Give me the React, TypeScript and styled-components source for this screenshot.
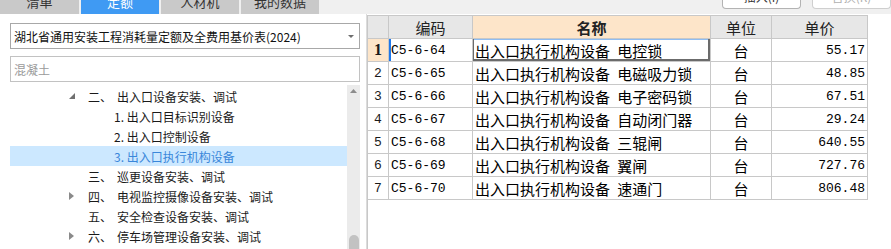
import React from "react";
import styled, { createGlobalStyle, css } from "styled-components";

const Global = createGlobalStyle`
  html, body { margin: 0; padding: 0; background: #ffffff; }
  body { font-family: "Noto Sans CJK SC", "Noto Sans", sans-serif; }
  * { box-sizing: border-box; }
`;

const Page = styled.div`
  width: 891px;
  height: 249px;
  overflow: hidden;
  display: flex;
  flex-direction: column;
  background: #ffffff;
`;

const TopBar = styled.div`
  height: 14px;
  flex: none;
  display: flex;
  background: #f0f0f0;
  overflow: hidden;
`;

const Tabs = styled.div`
  display: grid;
  grid-template-columns: 79px 78px 78px 78px;
  column-gap: 2px;
`;

const Tab = styled.div<{ $active?: boolean }>`
  height: 14px;
  display: flex;
  align-items: flex-end;
  justify-content: center;
  padding-bottom: 5px;
  overflow: hidden;
  font-size: 13px;
  line-height: 14px;
  background: ${(p) => (p.$active ? "#3f9af3" : "#c9c9c9")};
  color: ${(p) => (p.$active ? "#ffffff" : "#333333")};
`;

const TopButtons = styled.div`
  margin-left: auto;
  display: flex;
  gap: 11px;
`;

const TopButton = styled.div<{ $disabled?: boolean }>`
  width: 79px;
  height: 9px;
  display: flex;
  align-items: flex-end;
  justify-content: center;
  padding-bottom: 4px;
  overflow: hidden;
  background: #ffffff;
  border: 1px solid ${(p) => (p.$disabled ? "#cfcfcf" : "#b3b3b3")};
  border-top: none;
  border-radius: 0 0 4px 4px;
  font-size: 12px;
  line-height: 14px;
  color: ${(p) => (p.$disabled ? "#b0b0b0" : "#333333")};
`;

const Body = styled.div`
  flex: 1;
  display: flex;
  min-height: 0;
`;

const LeftPanel = styled.div`
  width: 367px;
  flex: none;
  display: flex;
  flex-direction: column;
  padding: 9px 6px 0 10px;
  border-right: 1px solid #dcdcdc;
  background: #ffffff;
`;

const SelectBox = styled.div`
  height: 26px;
  width: 350px;
  display: flex;
  align-items: center;
  padding: 0 5px 0 3px;
  border: 1px solid #a8a8a8;
  font-size: 12px;
  color: #111111;
`;

const SelectText = styled.span`
  flex: 1;
  white-space: nowrap;
`;

const SearchBox = styled.div`
  height: 26px;
  width: 350px;
  margin-top: 7px;
  display: flex;
  align-items: center;
  padding: 0 3px;
  border: 1px solid #c2c2c2;
  font-size: 12px;
  color: #9a9a9a;
`;

const TreeArea = styled.div`
  flex: 1;
  display: flex;
  margin-top: 3px;
  min-height: 0;
`;

const TreeList = styled.div`
  flex: 1;
  padding-top: 1px;
`;

const TreeRow = styled.div<{ $level: number; $selected?: boolean }>`
  height: 20px;
  display: flex;
  align-items: center;
  font-size: 12px;
  white-space: nowrap;
  padding-left: ${(p) => (p.$level === 1 ? 57 : 104)}px;
  color: ${(p) => (p.$selected ? "#3a87da" : "#1a1a1a")};
  background: ${(p) => (p.$selected ? "#cce8ff" : "transparent")};
`;

const Toggle = styled.span`
  width: 21px;
  flex: none;
  display: flex;
  align-items: center;
  padding-left: 2px;
`;

const Num = styled.span`
  width: 29px;
  flex: none;
`;

const ScrollBar = styled.div`
  width: 13px;
  flex: none;
  display: flex;
  flex-direction: column;
  align-items: center;
  background: #ebebeb;
  padding-top: 4px;
`;

const ScrollSpacer = styled.div`
  flex: 1;
`;

const ScrollThumb = styled.div`
  width: 10px;
  height: 18px;
  flex: none;
  margin-bottom: -4px;
  background: #c2c2c2;
  border-radius: 5px 5px 0 0;
`;

const RightPanel = styled.div`
  flex: 1;
  padding-top: 1px;
  background: #ffffff;
`;

const TableFrame = styled.div`
  height: 100%;
  border-left: 1px solid #c8c8c8;
`;

const Grid = styled.div`
  width: 500px;
  display: grid;
  grid-template-columns: 20px 83px 237px 60px 95px;
  grid-auto-rows: 22px;
  gap: 1px;
  background: #c8c8c8;
  border-top: 1px solid #c8c8c8;
  border-right: 1px solid #c8c8c8;
  border-bottom: 1px solid #c8c8c8;
`;

const HeadCell = styled.div<{ $hot?: boolean }>`
  display: flex;
  align-items: center;
  justify-content: center;
  font-size: 15px;
  color: #222222;
  font-weight: ${(p) => (p.$hot ? 700 : 400)};
  background: ${(p) => (p.$hot ? "#fde5c9" : "#e7e7e7")};
`;

const Cell = styled.div<{
  $align?: "left" | "center" | "right";
  $mono?: boolean;
  $active?: boolean;
  $marker?: boolean;
}>`
  display: flex;
  align-items: center;
  background: #ffffff;
  color: #000000;
  white-space: nowrap;
  overflow: hidden;
  justify-content: ${(p) =>
    p.$align === "center" ? "center" : p.$align === "right" ? "flex-end" : "flex-start"};
  padding: 0 ${(p) => (p.$align === "right" ? 2 : 0)}px 0
    ${(p) => (p.$align === "left" ? 2 : 0)}px;
  ${(p) =>
    p.$mono
      ? css`
          font-family: "Liberation Mono", "Noto Sans CJK SC", monospace;
          font-size: 13px;
        `
      : css`
          font-family: "Noto Sans CJK SC", sans-serif;
          font-size: 15px;
          word-spacing: 4px;
        `}
  ${(p) =>
    p.$active &&
    css`
      box-shadow: inset 1px 0 0 #6b6b6b, inset -2px -2px 0 #6b6b6b, inset 0 1px 0 #8fbdf2;
    `}
  ${(p) =>
    p.$marker &&
    css`
      box-shadow: inset 2px 0 0 #1f78ea;
    `}
`;

const RowNum = styled.div<{ $current?: boolean }>`
  display: flex;
  align-items: center;
  justify-content: center;
  background: ${(p) => (p.$current ? "#fde5c9" : "#ffffff")};
  color: #1a1a1a;
  ${(p) =>
    p.$current
      ? css`
          font-family: "Liberation Serif", serif;
          font-weight: 700;
          font-size: 16px;
        `
      : css`
          font-family: "Liberation Mono", monospace;
          font-size: 13px;
        `}
`;

const OpenIcon = () => (
  <svg width="6" height="6" viewBox="0 0 6 6">
    <polygon points="6,0 6,6 0,6" fill="#707070" />
  </svg>
);

const ClosedIcon = () => (
  <svg width="5" height="8" viewBox="0 0 5 8">
    <polygon points="0,0 5,4 0,8" fill="#8a8a8a" />
  </svg>
);

type TreeItem = {
  level: number;
  toggle?: "open" | "closed";
  num?: string;
  label: string;
  selected?: boolean;
};

const tree: TreeItem[] = [
  { level: 1, toggle: "open", num: "二、", label: "出入口设备安装、调试" },
  { level: 2, label: "1. 出入口目标识别设备" },
  { level: 2, label: "2. 出入口控制设备" },
  { level: 2, label: "3. 出入口执行机构设备", selected: true },
  { level: 1, num: "三、", label: "巡更设备安装、调试" },
  { level: 1, toggle: "closed", num: "四、", label: "电视监控摄像设备安装、调试" },
  { level: 1, num: "五、", label: "安全检查设备安装、调试" },
  { level: 1, toggle: "closed", num: "六、", label: "停车场管理设备安装、调试" },
];

const rows = [
  { code: "C5-6-64", name: "出入口执行机构设备 电控锁", unit: "台", price: "55.17" },
  { code: "C5-6-65", name: "出入口执行机构设备 电磁吸力锁", unit: "台", price: "48.85" },
  { code: "C5-6-66", name: "出入口执行机构设备 电子密码锁", unit: "台", price: "67.51" },
  { code: "C5-6-67", name: "出入口执行机构设备 自动闭门器", unit: "台", price: "29.24" },
  { code: "C5-6-68", name: "出入口执行机构设备 三辊闸", unit: "台", price: "640.55" },
  { code: "C5-6-69", name: "出入口执行机构设备 翼闸", unit: "台", price: "727.76" },
  { code: "C5-6-70", name: "出入口执行机构设备 速通门", unit: "台", price: "806.48" },
];

export default function App() {
  return (
    <Page>
      <Global />
      <TopBar>
        <Tabs>
          <Tab>清单</Tab>
          <Tab $active>定额</Tab>
          <Tab>人材机</Tab>
          <Tab>我的数据</Tab>
        </Tabs>
        <TopButtons>
          <TopButton>插入(I)</TopButton>
          <TopButton $disabled>替换(R)</TopButton>
        </TopButtons>
      </TopBar>
      <Body>
        <LeftPanel>
          <SelectBox>
            <SelectText>湖北省通用安装工程消耗量定额及全费用基价表(2024)</SelectText>
            <svg width="6" height="3" viewBox="0 0 6 3">
              <polygon points="0,0 6,0 3,3" fill="#6e6e6e" />
            </svg>
          </SelectBox>
          <SearchBox>混凝土</SearchBox>
          <TreeArea>
            <TreeList>
              {tree.map((t, i) => (
                <TreeRow key={i} $level={t.level} $selected={t.selected}>
                  {t.level === 1 && (
                    <Toggle>
                      {t.toggle === "open" && <OpenIcon />}
                      {t.toggle === "closed" && <ClosedIcon />}
                    </Toggle>
                  )}
                  {t.num && <Num>{t.num}</Num>}
                  <span>{t.label}</span>
                </TreeRow>
              ))}
            </TreeList>
            <ScrollBar>
              <svg width="7" height="4" viewBox="0 0 7 4">
                <polygon points="0,4 7,4 3.5,0" fill="#8c8c8c" />
              </svg>
              <ScrollSpacer />
              <ScrollThumb />
            </ScrollBar>
          </TreeArea>
        </LeftPanel>
        <RightPanel>
          <TableFrame>
            <Grid>
              <HeadCell />
              <HeadCell>编码</HeadCell>
              <HeadCell $hot>名称</HeadCell>
              <HeadCell>单位</HeadCell>
              <HeadCell>单价</HeadCell>
              {rows.map((r, i) => (
                <React.Fragment key={r.code}>
                  <RowNum $current={i === 0}>{i + 1}</RowNum>
                  <Cell $align="left" $mono $marker={i === 0}>
                    {r.code}
                  </Cell>
                  <Cell $align="left" $active={i === 0}>
                    {r.name}
                  </Cell>
                  <Cell $align="center">{r.unit}</Cell>
                  <Cell $align="right" $mono>
                    {r.price}
                  </Cell>
                </React.Fragment>
              ))}
            </Grid>
          </TableFrame>
        </RightPanel>
      </Body>
    </Page>
  );
}
